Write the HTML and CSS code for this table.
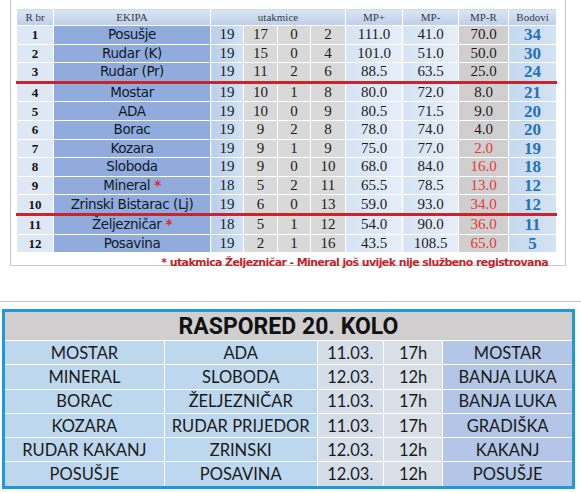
FILE: index.html
```html
<!DOCTYPE html>
<html>
<head>
  <meta charset="UTF-8">
  <title>Tabela i raspored</title>
  <link rel="stylesheet" href="styles.css">
</head>
<body>
  <div class="standings-box">
    <table class="standings">
      <colgroup>
        <col class="c-rank"><col class="c-team">
        <col class="c-n"><col class="c-n2"><col class="c-n"><col class="c-n3">
        <col class="c-mp"><col class="c-mp2"><col class="c-mpr"><col class="c-pts">
      </colgroup>
      <thead>
        <tr>
          <th>R br</th>
          <th>EKIPA</th>
          <th colspan="4">utakmice</th>
          <th>MP+</th>
          <th>MP-</th>
          <th>MP-R</th>
          <th>Bodovi</th>
        </tr>
      </thead>
      <tbody>
        <tr><td class="rank">1</td><td class="team">Posušje</td><td class="played">19</td><td class="wdl">17</td><td class="wdl">0</td><td class="wdl">2</td><td class="mp">111.0</td><td class="mp">41.0</td><td class="mpr">70.0</td><td class="pts">34</td></tr>
        <tr><td class="rank">2</td><td class="team">Rudar (K)</td><td class="played">19</td><td class="wdl">15</td><td class="wdl">0</td><td class="wdl">4</td><td class="mp">101.0</td><td class="mp">51.0</td><td class="mpr">50.0</td><td class="pts">30</td></tr>
        <tr class="cut"><td class="rank">3</td><td class="team">Rudar (Pr)</td><td class="played">19</td><td class="wdl">11</td><td class="wdl">2</td><td class="wdl">6</td><td class="mp">88.5</td><td class="mp">63.5</td><td class="mpr">25.0</td><td class="pts">24</td></tr>
        <tr><td class="rank">4</td><td class="team">Mostar</td><td class="played">19</td><td class="wdl">10</td><td class="wdl">1</td><td class="wdl">8</td><td class="mp">80.0</td><td class="mp">72.0</td><td class="mpr">8.0</td><td class="pts">21</td></tr>
        <tr><td class="rank">5</td><td class="team">ADA</td><td class="played">19</td><td class="wdl">10</td><td class="wdl">0</td><td class="wdl">9</td><td class="mp">80.5</td><td class="mp">71.5</td><td class="mpr">9.0</td><td class="pts">20</td></tr>
        <tr><td class="rank">6</td><td class="team">Borac</td><td class="played">19</td><td class="wdl">9</td><td class="wdl">2</td><td class="wdl">8</td><td class="mp">78.0</td><td class="mp">74.0</td><td class="mpr">4.0</td><td class="pts">20</td></tr>
        <tr><td class="rank">7</td><td class="team">Kozara</td><td class="played">19</td><td class="wdl">9</td><td class="wdl">1</td><td class="wdl">9</td><td class="mp">75.0</td><td class="mp">77.0</td><td class="mpr neg">2.0</td><td class="pts">19</td></tr>
        <tr><td class="rank">8</td><td class="team">Sloboda</td><td class="played">19</td><td class="wdl">9</td><td class="wdl">0</td><td class="wdl">10</td><td class="mp">68.0</td><td class="mp">84.0</td><td class="mpr neg">16.0</td><td class="pts">18</td></tr>
        <tr><td class="rank">9</td><td class="team">Mineral <span class="star">*</span></td><td class="played">18</td><td class="wdl">5</td><td class="wdl">2</td><td class="wdl">11</td><td class="mp">65.5</td><td class="mp">78.5</td><td class="mpr neg">13.0</td><td class="pts">12</td></tr>
        <tr class="cut"><td class="rank">10</td><td class="team">Zrinski Bistarac (Lj)</td><td class="played">19</td><td class="wdl">6</td><td class="wdl">0</td><td class="wdl">13</td><td class="mp">59.0</td><td class="mp">93.0</td><td class="mpr neg">34.0</td><td class="pts">12</td></tr>
        <tr><td class="rank">11</td><td class="team">Željezničar <span class="star">*</span></td><td class="played">18</td><td class="wdl">5</td><td class="wdl">1</td><td class="wdl">12</td><td class="mp">54.0</td><td class="mp">90.0</td><td class="mpr neg">36.0</td><td class="pts">11</td></tr>
        <tr><td class="rank">12</td><td class="team">Posavina</td><td class="played">19</td><td class="wdl">2</td><td class="wdl">1</td><td class="wdl">16</td><td class="mp">43.5</td><td class="mp">108.5</td><td class="mpr neg">65.0</td><td class="pts">5</td></tr>
      </tbody>
    </table>
    <p class="note">* utakmica Željezničar - Mineral još uvijek nije službeno registrovana</p>
  </div>

  <hr class="divider">

  <table class="schedule">
    <colgroup>
      <col class="s-home"><col class="s-away"><col class="s-date"><col class="s-time"><col class="s-venue">
    </colgroup>
    <thead>
      <tr><th colspan="5">RASPORED 20. KOLO</th></tr>
    </thead>
    <tbody>
      <tr><td class="club">MOSTAR</td><td class="club">ADA</td><td class="date">11.03.</td><td class="time">17h</td><td class="venue">MOSTAR</td></tr>
      <tr><td class="club">MINERAL</td><td class="club">SLOBODA</td><td class="date">12.03.</td><td class="time">12h</td><td class="venue">BANJA LUKA</td></tr>
      <tr><td class="club">BORAC</td><td class="club">ŽELJEZNIČAR</td><td class="date">11.03.</td><td class="time">17h</td><td class="venue">BANJA LUKA</td></tr>
      <tr><td class="club">KOZARA</td><td class="club">RUDAR PRIJEDOR</td><td class="date">11.03.</td><td class="time">17h</td><td class="venue">GRADIŠKA</td></tr>
      <tr><td class="club">RUDAR KAKANJ</td><td class="club">ZRINSKI</td><td class="date">12.03.</td><td class="time">12h</td><td class="venue">KAKANJ</td></tr>
      <tr><td class="club">POSUŠJE</td><td class="club">POSAVINA</td><td class="date">12.03.</td><td class="time">12h</td><td class="venue">POSUŠJE</td></tr>
    </tbody>
  </table>
</body>
</html>
```

FILE: styles.css
```css
body {
  margin: 0;
  background-color: #fff;
  font-family: "Liberation Serif", serif;
}
.standings-box {
  margin-left: 10px;
  width: 556px;
  height: 266px;
  padding: 8px 0 0 5px;
  box-sizing: border-box;
  border: 1px solid #c9c9c9;
  border-top: none;
}
.standings {
  border-collapse: collapse;
  table-layout: fixed;
  width: 540px;
  border: 1px solid #9db5dc;
}
.c-rank { width: 37px; }
.c-team { width: 157px; }
.c-n { width: 33px; }
.c-n2 { width: 34px; }
.c-n3 { width: 35px; }
.c-mp { width: 57px; }
.c-mp2 { width: 56px; }
.c-mpr { width: 50px; }
.c-pts { width: 48px; }
.standings th {
  height: 16px;
  padding: 0;
  font-weight: normal;
  font-size: 11px;
  color: #333a4a;
  background: linear-gradient(#dbe5f4, #bfcfe9);
  border: 1px solid #fff;
}
.standings td {
  height: 17.6px;
  padding: 0;
  text-align: center;
  font-size: 15px;
  line-height: 17px;
  color: #1c1c1c;
  border: 1px solid #fff;
}
.standings tr.cut td {
  border-bottom: 3px solid #c5262d;
}
.standings td.rank {
  background-color: #dde8f4;
  font-weight: bold;
  font-size: 13px;
  color: #111;
}
.standings td.team {
  background-color: #91acdc;
  font-family: "DejaVu Sans", sans-serif;
  font-size: 13.5px;
  letter-spacing: -0.4px;
  color: #101828;
}
.star {
  color: #e0262e;
  font-weight: bold;
}
.standings td.played {
  background: linear-gradient(90deg, #b9cfec, #d3e1f3);
}
.standings td.wdl {
  background-color: #d9d9d9;
}
.standings td.mp {
  background: linear-gradient(90deg, #d6e3f3, #e6eef8);
}
.standings td.mpr {
  background-color: #d0cecf;
}
.standings td.neg {
  color: #e23a3a;
}
.standings td.pts {
  background: linear-gradient(90deg, #c4d8ef, #d5e3f3);
  font-weight: bold;
  font-size: 17px;
  color: #2472b8;
}
.note {
  margin: 3px 17px 0 0;
  text-align: right;
  font-family: "DejaVu Sans", sans-serif;
  font-weight: bold;
  font-size: 11px;
  letter-spacing: -0.6px;
  color: #c3232c;
}
.divider {
  margin: 35px 0 7px;
  border: none;
  border-top: 1px solid #c4c4c4;
}
.schedule {
  margin-left: 2px;
  width: 573px;
  border-collapse: collapse;
  table-layout: fixed;
  border: 3px solid #1f9ad7;
  font-family: "Lato", sans-serif;
  color: #1a1a1a;
}
.s-home { width: 160px; }
.s-away { width: 152px; }
.s-date { width: 66px; }
.s-time { width: 59px; }
.s-venue { width: 130px; }
.schedule th {
  height: 28px;
  padding: 0;
  background-color: #d0cece;
  font-family: "Roboto", sans-serif;
  font-weight: bold;
  font-size: 23px;
  color: #111;
  border-bottom: 1px solid #fff;
}
.schedule td {
  height: 23.3px;
  padding: 0;
  text-align: center;
  font-size: 16.5px;
  border: 1px solid #fff;
}
.schedule td.club {
  background-color: #bdd7ee;
}
.schedule td.date {
  background-color: #d5dde9;
}
.schedule td.time {
  background-color: #d9dfe7;
}
.schedule td.venue {
  background-color: #b3c6e7;
}
```
